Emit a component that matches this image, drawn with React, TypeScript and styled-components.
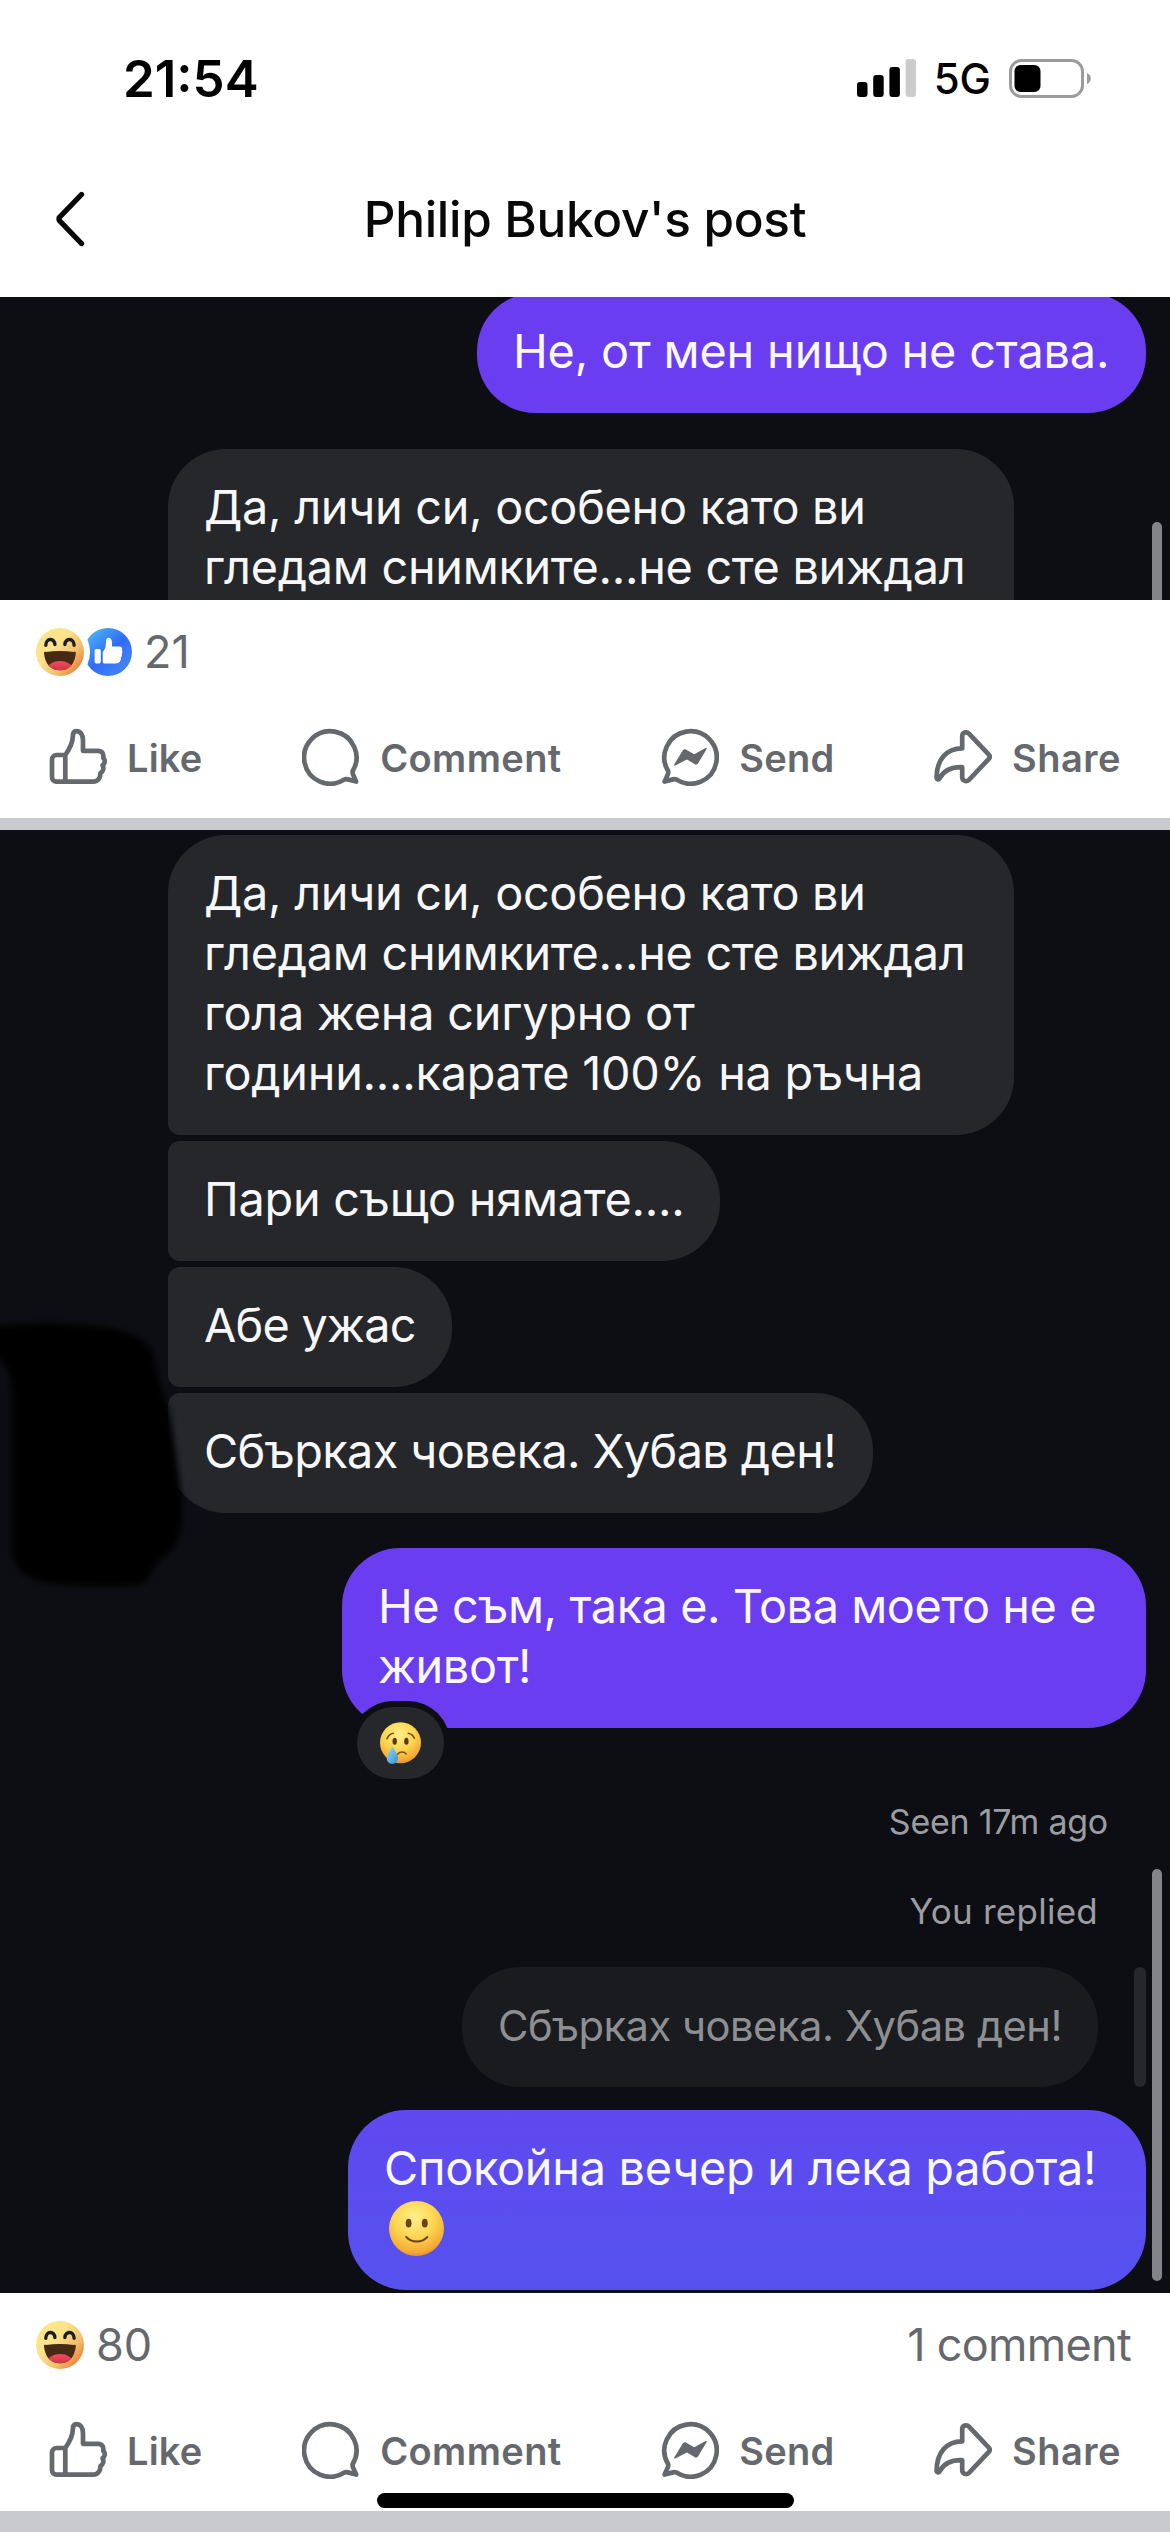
import React from 'react';
import styled, { createGlobalStyle } from 'styled-components';

const colors = {
  chat: '#0d0e13',
  bubble: '#25272b',
  purple: '#6a3df0',
  grey: '#65686c',
  divider: '#c9cacf',
  thumb: '#838488',
};

const GlobalStyle = createGlobalStyle`
  * { box-sizing: border-box; }
  body {
    margin: 0;
    background: #fff;
    font-family: Inter, Roboto, sans-serif;
  }
  svg { display: block; flex: none; }
`;

/* ---------- Page shell ---------- */

const Screen = styled.div`
  position: relative;
  width: 1170px;
  height: 2532px;
  overflow: hidden;
  display: flex;
  flex-direction: column;
  background: #fff;
`;

const StatusBar = styled.header`
  flex: none;
  height: 156px;
  padding: 0 79px 0 123px;
  display: flex;
  align-items: center;
  justify-content: space-between;
  color: #000;
`;

const Clock = styled.div`
  font-size: 51px;
  font-weight: 600;
`;

const StatusIcons = styled.div`
  display: flex;
  align-items: center;
  gap: 18px;
`;

const Network = styled.span`
  font-size: 42px;
  font-weight: 500;
`;

const NavBar = styled.nav`
  flex: none;
  height: 141px;
  padding: 0 54px 15px;
  display: grid;
  grid-template-columns: 60px 1fr 60px;
  align-items: center;
`;

const NavTitle = styled.h1`
  margin: 0;
  text-align: center;
  font-size: 49.5px;
  font-weight: 500;
  letter-spacing: -0.3px;
  color: #080809;
`;

const HomeIndicator = styled.div`
  position: absolute;
  left: 377px;
  bottom: 24px;
  width: 417px;
  height: 15px;
  border-radius: 8px;
  background: #000;
`;

/* ---------- Chat screenshots ---------- */

const Chat = styled.section<{ $height: number; $padTop?: number }>`
  position: relative;
  flex: none;
  height: ${(p) => p.$height}px;
  padding: ${(p) => p.$padTop ?? 0}px 24px 0 168px;
  overflow: hidden;
  display: flex;
  flex-direction: column;
  align-items: flex-start;
  background: ${colors.chat};
`;

type BubbleProps = {
  $width: number;
  $gap?: number;
  $bg?: string;
  $mine?: boolean;
  $radius?: string;
};

const Bubble = styled.div<BubbleProps>`
  position: relative;
  flex: none;
  width: ${(p) => p.$width}px;
  margin-top: ${(p) => p.$gap ?? 0}px;
  padding: 28px 0 32px 36px;
  align-self: ${(p) => (p.$mine ? 'flex-end' : 'flex-start')};
  border-radius: ${(p) => p.$radius ?? '58px'};
  background: ${(p) => p.$bg ?? (p.$mine ? colors.purple : colors.bubble)};
  color: #f8f8fa;
`;

const Line = styled.span<{ $track?: number }>`
  display: block;
  height: 60px;
  line-height: 60px;
  font-size: 46.8px;
  white-space: nowrap;
  letter-spacing: ${(p) => p.$track ?? 0}px;
`;

const EmojiLine = styled.span`
  height: 60px;
  padding-left: 5px;
  display: flex;
  align-items: center;
`;

const ReactionPill = styled.div`
  position: absolute;
  left: 15px;
  bottom: -51px;
  width: 87px;
  height: 72px;
  border-radius: 36px;
  display: grid;
  place-items: center;
  background: ${colors.bubble};
  box-shadow: 0 0 0 6px ${colors.chat};
`;

const Meta = styled.div<{ $size: number; $gap: number; $right: number; $track: number }>`
  flex: none;
  align-self: flex-end;
  height: 40px;
  line-height: 40px;
  margin: ${(p) => p.$gap}px ${(p) => p.$right}px 0 0;
  font-size: ${(p) => p.$size}px;
  letter-spacing: ${(p) => p.$track}px;
  color: #9c9da1;
`;

const QuoteRow = styled.div`
  flex: none;
  align-self: flex-end;
  margin-top: 36px;
  height: 120px;
  display: flex;
  gap: 36px;
`;

const QuoteBubble = styled.div`
  width: 636px;
  padding: 29px 0 0 36px;
  border-radius: 58px;
  line-height: 60px;
  font-size: 41.7px;
  letter-spacing: -0.5px;
  white-space: nowrap;
  background: #191b1f;
  color: #8e8f92;
`;

const QuoteBar = styled.div`
  width: 12px;
  border-radius: 6px;
  background: ${colors.bubble};
`;

const ScrollThumb = styled.div<{ $top: number; $height: number }>`
  position: absolute;
  top: ${(p) => p.$top}px;
  right: 8px;
  width: 10px;
  height: ${(p) => p.$height}px;
  border-radius: 5px;
  background: ${colors.thumb};
`;

const Scribble = styled.svg`
  position: absolute;
  left: 0;
  top: 470px;
`;

/* ---------- Post footer ---------- */

const Footer = styled.footer`
  flex: none;
  height: 218px;
  padding-bottom: 8px;
  display: flex;
  flex-direction: column;
  color: ${colors.grey};
`;

const Counts = styled.div`
  height: 104px;
  padding: 0 39px 0 36px;
  display: flex;
  align-items: center;
  justify-content: space-between;
  font-size: 45px;
  line-height: 54px;
`;

const Reactions = styled.div`
  display: flex;
  align-items: center;
`;

const ReactionBadge = styled.span<{ $front?: boolean }>`
  position: relative;
  z-index: ${(p) => (p.$front ? 1 : 0)};
  border-radius: 50%;
  box-shadow: ${(p) => (p.$front ? '0 0 0 6px #fff' : 'none')};
`;

const Count = styled.span`
  margin-left: 12px;
`;

const CommentCount = styled.span`
  letter-spacing: -0.7px;
`;

const Actions = styled.div`
  flex: 1;
  padding: 0 49px;
  display: flex;
  align-items: center;
  justify-content: space-between;
`;

const Action = styled.button`
  display: flex;
  align-items: center;
  gap: 20px;
  padding: 0;
  border: 0;
  background: none;
  color: inherit;
  font: 600 38px/46px Inter, Roboto, sans-serif;
`;

const ActionLabel = styled.span<{ $track: number }>`
  padding-top: 2px;
  letter-spacing: ${(p) => p.$track}px;
`;

const Divider = styled.div<{ $height: number }>`
  flex: none;
  height: ${(p) => p.$height}px;
  background: ${colors.divider};
`;

/* ---------- Drawings ---------- */

const SignalIcon = () => (
  <svg width="59" height="38" viewBox="0 0 59 38">
    <rect x="0" y="23" width="10.5" height="15" rx="3" />
    <rect x="16.2" y="16" width="10.5" height="22" rx="3" />
    <rect x="32.4" y="8" width="10.5" height="30" rx="3" />
    <rect x="48.6" y="0" width="10.5" height="38" rx="3" fill="#ccc" />
  </svg>
);

const BatteryIcon = () => (
  <svg width="82" height="39" viewBox="0 0 82 39">
    <rect x="1.5" y="1.5" width="72" height="36" rx="11" fill="none" stroke="#9b9b9b" strokeWidth="3" />
    <rect x="5.5" y="6" width="26" height="27" rx="6" />
    <path d="M78 14c5 2 5 9 0 11z" fill="#9b9b9b" />
  </svg>
);

const BackIcon = () => (
  <svg width="34" height="58" viewBox="0 0 34 58" fill="none" stroke="#080809" strokeWidth="5.4" strokeLinecap="round" strokeLinejoin="round">
    <path d="M27.5 4.5 5.8 27a2.8 2.8 0 0 0 0 4L27.5 53.5" />
  </svg>
);

const iconProps = {
  width: 58,
  height: 58,
  viewBox: '0 0 58 58',
  fill: 'none',
  stroke: 'currentColor',
  strokeWidth: 4.7,
  strokeLinecap: 'round' as const,
  strokeLinejoin: 'round' as const,
};

const balloon =
  'M50.7 43A26.2 26.2 0 1 0 42.3 51.6C43.4 51.1 44.6 51.1 45.8 51.4L54.2 53.6L51.1 46.6C50.6 45.2 50.3 44 50.7 43Z';

const LikeIcon = () => (
  <svg {...iconProps}>
    <path d="M16.3 27H7.4A4.4 4.4 0 0 0 3 31.4V49.2A4.4 4.4 0 0 0 7.4 53.6H44C48.6 53.6 51.6 50 51.4 45.2C54.2 43.4 55.2 40 53.6 37.4C56.4 35 56.4 31.8 54.2 29.8C55 25.6 52.8 22.8 49 22.8H34V12.5C34 6.4 31.2 3.1 27.4 3.1C24.4 3.1 23.8 5.6 23.8 8.4C23.8 15.4 20.8 20.4 16.3 27V53.6" />
  </svg>
);

const CommentIcon = () => (
  <svg {...iconProps}>
    <path d={balloon} />
  </svg>
);

const SendIcon = () => (
  <svg {...iconProps}>
    <path transform="translate(57.8) scale(-1 1)" d={balloon} />
    <path d="M13.9 36.8 22.4 22.8 24 21.9 33.2 27.2 45 20.6 36.3 35.2 34.8 35.9 26 30.6Z" fill="currentColor" strokeWidth="1.6" />
  </svg>
);

const ShareIcon = () => (
  <svg {...iconProps}>
    <path d="M28.2 20.4V8.3C28.2 4.5 32.4 3 35 5.6L54.6 26.4C56 27.9 56 29.6 54.6 31.1L35 51.8C32.4 54.4 28.2 52.9 28.2 49.1V39.2C16.5 38.8 9.6 43 5.6 50.3C4.6 52 2.6 51.4 2.6 49.5C2.8 32 12 20.4 28.2 20.4Z" />
  </svg>
);

const HahaIcon = () => (
  <svg width="48" height="48" viewBox="0 0 48 48" role="img" aria-label="Haha">
    <defs>
      <linearGradient id="haha" x1="0.12" y1="0.1" x2="0.95" y2="0.85">
        <stop offset="0" stopColor="#fae689" />
        <stop offset="0.35" stopColor="#fae38c" />
        <stop offset="0.7" stopColor="#f3bf6c" />
        <stop offset="1" stopColor="#e87935" />
      </linearGradient>
      <linearGradient id="tongue" x1="0" y1="0" x2="0" y2="1">
        <stop offset="0" stopColor="#f04d60" />
        <stop offset="1" stopColor="#bd2337" />
      </linearGradient>
      <clipPath id="mouth">
        <path d="M8 25.4C8 24 8.7 23.7 10 23.9C19 22.6 29 22.6 37.8 23.9C39.2 23.7 39.9 24 39.8 25.4C38.8 36 33 42.2 24 42.2C15 42.2 9 36 8 25.4Z" />
      </clipPath>
    </defs>
    <circle cx="24" cy="24" r="24" fill="url(#haha)" />
    <g fill="none" stroke="#1c1e24" strokeWidth="3.4" strokeLinecap="round">
      <path d="M9.8 17.3C9.8 9.7 18.8 9.7 18.9 16.6" />
      <path d="M28.9 16.6C29 9.7 38.1 9.7 38.1 17.3" />
    </g>
    <g clipPath="url(#mouth)">
      <rect x="6" y="20" width="36" height="24" fill="#472a15" />
      <ellipse cx="24" cy="40.6" rx="12.4" ry="7.6" fill="url(#tongue)" />
    </g>
  </svg>
);

const ThumbBadge = () => (
  <svg width="48" height="48" viewBox="0 0 48 48" role="img" aria-label="Like">
    <defs>
      <linearGradient id="thumb" x1="0.1" y1="0.1" x2="0.75" y2="0.8">
        <stop offset="0" stopColor="#4bb4f8" />
        <stop offset="0.6" stopColor="#2f6bf5" />
        <stop offset="1" stopColor="#3f80f7" />
      </linearGradient>
    </defs>
    <circle cx="24" cy="24" r="24" fill="url(#thumb)" />
    <rect x="10.6" y="21" width="6.2" height="14.4" rx="1.6" fill="#fff" />
    <path d="M18.7 24.2C21.2 21.4 22 18 22 14.2C22 11.2 22.8 9.7 24.4 9.7C26.8 9.7 28 11.8 28 14.6V18.6H35.4C37.6 18.6 38.5 20.2 38 22.2C38.6 23.2 38.6 24.8 37.8 25.8C38.1 27.2 37.8 28.6 36.9 29.5C37 33.4 35.4 35.4 31.8 35.4H20.2C19.2 35.4 18.7 34.9 18.7 34Z" fill="#fff" />
  </svg>
);

const FaceGradient = ({ id }: { id: string }) => (
  <radialGradient id={id} cx="0.46" cy="0.3" r="0.75">
    <stop offset="0" stopColor="#fff08c" />
    <stop offset="0.5" stopColor="#fdd54f" />
    <stop offset="0.85" stopColor="#f3a935" />
    <stop offset="1" stopColor="#dd8527" />
  </radialGradient>
);

const CryFace = () => (
  <svg width="41" height="42" viewBox="0 0 41 42" role="img" aria-label="Crying face">
    <defs>
      <FaceGradient id="cry" />
      <linearGradient id="tear" x1="0" y1="0" x2="1" y2="1">
        <stop offset="0" stopColor="#9bdcf8" />
        <stop offset="1" stopColor="#2f8fd0" />
      </linearGradient>
    </defs>
    <circle cx="20.5" cy="20.7" r="20.5" fill="url(#cry)" />
    <ellipse cx="14.7" cy="19.2" rx="2.2" ry="3.5" fill="#5a3413" />
    <ellipse cx="26.4" cy="19.2" rx="2.2" ry="3.5" fill="#5a3413" />
    <g fill="none" stroke="#7a4a18" strokeWidth="1.6" strokeLinecap="round">
      <path d="M7 16.6C8.4 13.6 10.4 11.8 13.2 11.3" />
      <path d="M28.3 11.3C31 11.8 33 13.4 34.3 16.2" />
      <path d="M17.6 32.2C19.4 29.4 24 29.4 26 31.8" />
    </g>
    <path d="M12.2 24.2C14.5 28.4 18 32.4 18 36.2C18 39.6 15.4 41.8 12.3 41.8C9.2 41.8 6.8 39.6 6.8 36.2C6.8 32.4 10.6 28.6 12.2 24.2Z" fill="url(#tear)" />
  </svg>
);

const SmileFace = () => (
  <svg width="55" height="55" viewBox="0 0 55 55" role="img" aria-label="Slightly smiling face">
    <defs>
      <FaceGradient id="smile" />
    </defs>
    <circle cx="27.5" cy="27.5" r="27.5" fill="url(#smile)" />
    <ellipse cx="19.6" cy="22.2" rx="2.9" ry="4.4" fill="#6e4216" />
    <ellipse cx="35.8" cy="22.2" rx="2.9" ry="4.4" fill="#6e4216" />
    <path d="M17.2 36C22.6 42 33 42 38.3 36" fill="none" stroke="#6e3f12" strokeWidth="1.9" strokeLinecap="round" />
  </svg>
);

/* ---------- Composition ---------- */

const actions = [
  { label: 'Like', track: 0.2, Icon: LikeIcon },
  { label: 'Comment', track: 0.4, Icon: CommentIcon },
  { label: 'Send', track: 0.2, Icon: SendIcon },
  { label: 'Share', track: 0.5, Icon: ShareIcon },
];

const PostFooter = ({ count, liked, comments }: { count: number; liked?: boolean; comments?: string }) => (
  <Footer>
    <Counts>
      <Reactions>
        <ReactionBadge $front>
          <HahaIcon />
        </ReactionBadge>
        {liked && (
          <ReactionBadge>
            <ThumbBadge />
          </ReactionBadge>
        )}
        <Count>{count}</Count>
      </Reactions>
      {comments && <CommentCount>{comments}</CommentCount>}
    </Counts>
    <Actions>
      {actions.map(({ label, track, Icon }) => (
        <Action key={label} type="button">
          <Icon />
          <ActionLabel $track={track}>{label}</ActionLabel>
        </Action>
      ))}
    </Actions>
  </Footer>
);

export default function App() {
  return (
    <>
      <GlobalStyle />
      <Screen>
        <StatusBar>
          <Clock>21:54</Clock>
          <StatusIcons>
            <SignalIcon />
            <Network>5G</Network>
            <BatteryIcon />
          </StatusIcons>
        </StatusBar>
        <NavBar>
          <BackIcon />
          <NavTitle>Philip Bukov's post</NavTitle>
        </NavBar>

        <Chat $height={303}>
          <Bubble $mine $width={669} $gap={-4}>
            <Line $track={-0.16}>Не, от мен нищо не става.</Line>
          </Bubble>
          <Bubble $width={846} $gap={36} $radius="58px 58px 0 0">
            <Line $track={-0.28}>Да, личи си, особено като ви</Line>
            <Line $track={-0.29}>гледам снимките...не сте виждал</Line>
          </Bubble>
          <ScrollThumb $top={225} $height={120} />
        </Chat>
        <PostFooter count={21} liked />
        <Divider $height={12} />

        <Chat $height={1463} $padTop={5}>
          <Bubble $width={846} $radius="58px 58px 58px 12px">
            <Line $track={-0.28}>Да, личи си, особено като ви</Line>
            <Line $track={-0.29}>гледам снимките...не сте виждал</Line>
            <Line $track={-0.2}>гола жена сигурно от</Line>
            <Line $track={-0.25}>години....карате 100% на ръчна</Line>
          </Bubble>
          <Bubble $width={552} $gap={6} $radius="12px 58px 58px 12px">
            <Line $track={-0.25}>Пари също нямате....</Line>
          </Bubble>
          <Bubble $width={284} $gap={6} $radius="12px 58px 58px 12px">
            <Line $track={-0.75}>Абе ужас</Line>
          </Bubble>
          <Bubble $width={705} $gap={6} $radius="12px 58px 58px 58px">
            <Line $track={-0.6}>Сбърках човека. Хубав ден!</Line>
          </Bubble>
          <Bubble $mine $width={804} $gap={35}>
            <Line $track={-0.42}>Не съм, така е. Това моето не е</Line>
            <Line $track={-0.36}>живот!</Line>
            <ReactionPill>
              <CryFace />
            </ReactionPill>
          </Bubble>
          <Meta $size={34} $gap={74} $right={38} $track={-0.25}>
            Seen 17m ago
          </Meta>
          <Meta $size={35} $gap={49} $right={48} $track={0.25}>
            You replied
          </Meta>
          <QuoteRow>
            <QuoteBubble>Сбърках човека. Хубав ден!</QuoteBubble>
            <QuoteBar />
          </QuoteRow>
          <Bubble $mine $width={798} $gap={23} $bg="linear-gradient(#5f49ef, #5651ee)">
            <Line $track={-0.26}>Спокойна вечер и лека работа!</Line>
            <EmojiLine>
              <SmileFace />
            </EmojiLine>
          </Bubble>
          <Scribble width="200" height="310" viewBox="0 1300 200 310">
            <defs>
              <filter id="brush" x="-20%" y="-20%" width="140%" height="140%">
                <feGaussianBlur stdDeviation="3" />
              </filter>
            </defs>
            <path
              filter="url(#brush)"
              d="M-20 1328C20 1322 80 1323 110 1328C130 1333 150 1341 153 1354C158 1380 164 1398 169 1410C174 1440 180 1480 182 1500C184 1530 178 1550 160 1560C152 1568 150 1582 138 1585C105 1588 70 1585 48 1583C28 1580 14 1570 12 1552V1390C11 1376 6 1356 -20 1348Z"
            />
          </Scribble>
          <ScrollThumb $top={1039} $height={412} />
        </Chat>
        <PostFooter count={80} comments="1 comment" />
        <Divider $height={21} />
        <HomeIndicator />
      </Screen>
    </>
  );
}
